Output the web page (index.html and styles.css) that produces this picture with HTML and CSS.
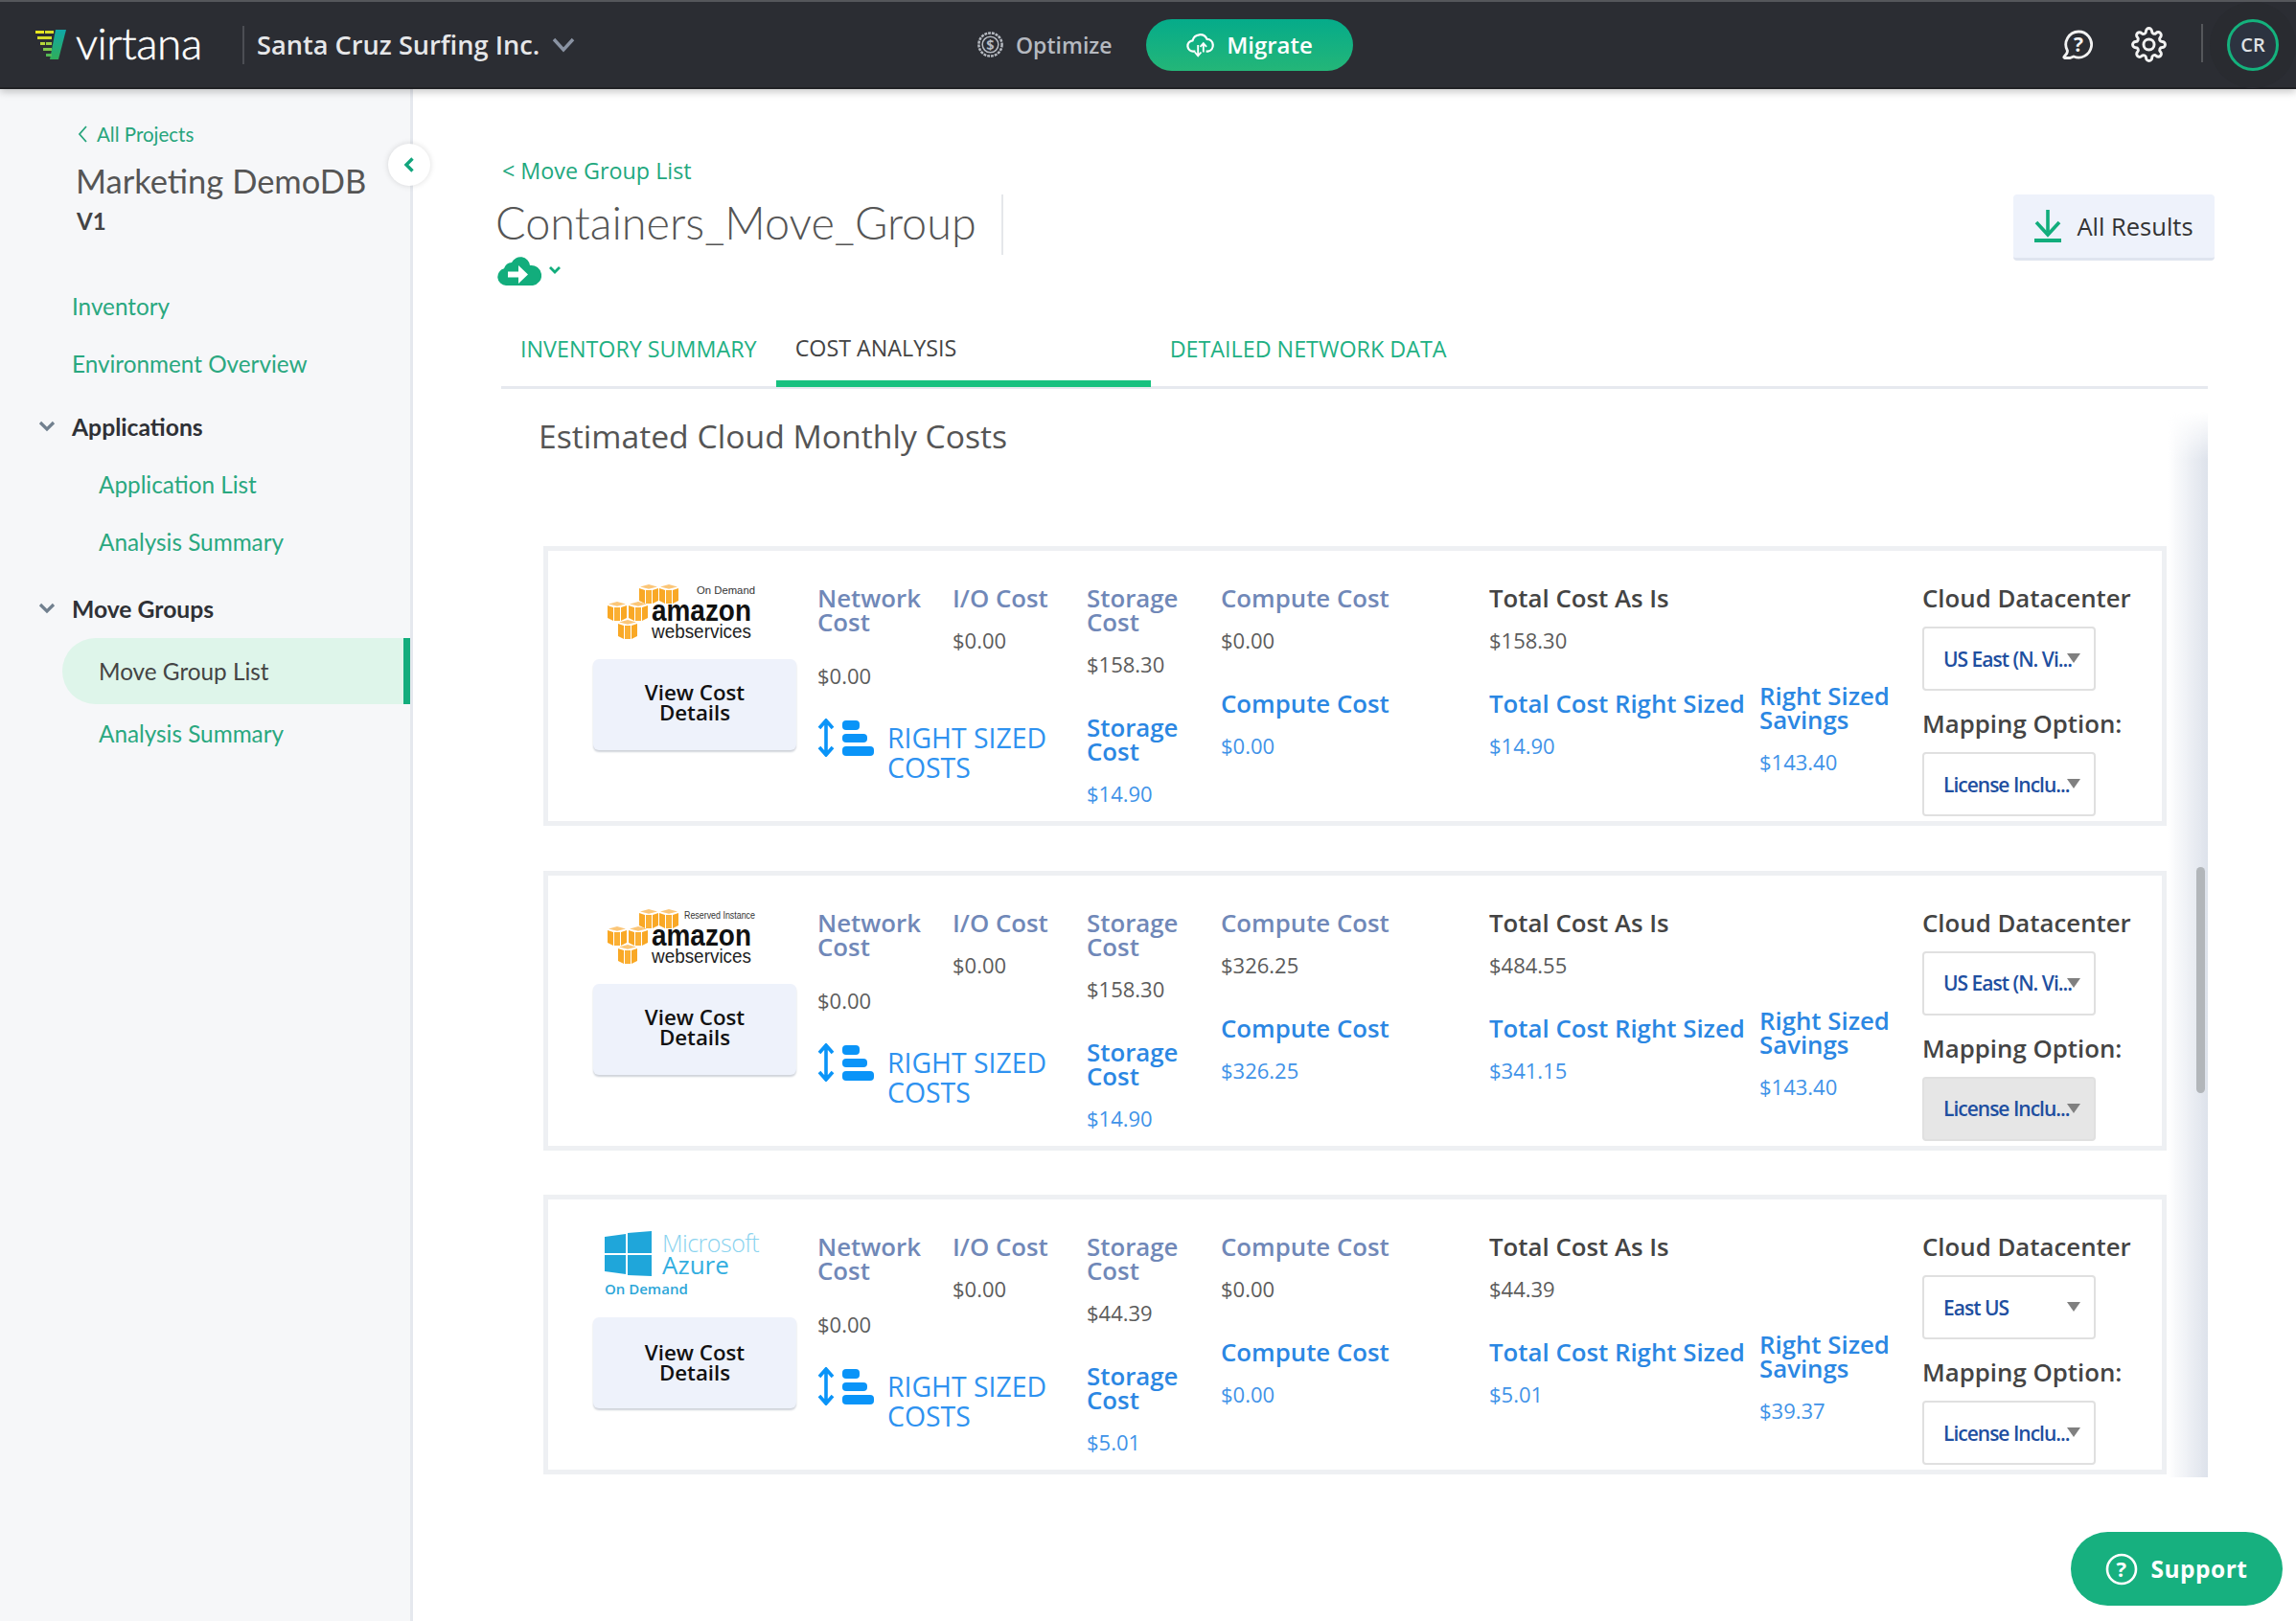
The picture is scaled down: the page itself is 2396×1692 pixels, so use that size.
FILE: index.html
```html
<!DOCTYPE html>
<html lang="en">
<head>
    <meta charset="UTF-8">
    <title>Containers_Move_Group - Cost Analysis</title>
    <link rel="stylesheet" href="styles.css">
</head>
<body>

    <!-- Shared shapes -->
    <svg class="defs" width="0" height="0">
        <defs>
            <linearGradient id="markGrad" x1="0" y1="0" x2="0" y2="1">
                <stop offset="0" stop-color="#10a8a8"/>
                <stop offset="1" stop-color="#2fae5a"/>
            </linearGradient>
            <symbol id="cube" viewBox="0 0 20 20">
                <polygon points="0,4 6,6 6,20 0,17" fill="#f9a825"/>
                <polygon points="7,6 13,6 13,20 7,20" fill="#fbb034"/>
                <polygon points="14,6 20,4 20,17 14,20" fill="#f9a825"/>
                <polygon points="1,2.6 10,0 19,2.6 10,4.8" fill="#fbc678"/>
            </symbol>
            <symbol id="resize" viewBox="0 0 59 40">
                <path d="M9 3v34M2 10l7-8 7 8M2 30l7 8 7-8" fill="none" stroke="#0a94f8" stroke-width="3.6"/>
                <rect x="26" y="2" width="18" height="10" rx="4" fill="#0a94f8"/>
                <rect x="26" y="16" width="26" height="9" rx="4" fill="#0a94f8"/>
                <rect x="26" y="29" width="33" height="10" rx="4" fill="#0a94f8"/>
            </symbol>
        </defs>
    </svg>

    <!-- Top Bar -->
    <header class="topbar">
        <div class="brand-area">
            <svg class="mark" viewBox="0 0 32 32">
                <path d="M21 0h11l-8 31h-9z" fill="url(#markGrad)"/>
                <rect x="0" y="1" width="9" height="3" fill="#e9e61f"/>
                <rect x="10" y="1" width="9" height="3" fill="#d8e02a"/>
                <rect x="2" y="7" width="15" height="3" fill="#d5dc2a"/>
                <rect x="5" y="13" width="5" height="3" fill="#b7d53a"/>
                <rect x="11" y="13" width="6" height="3" fill="#9ccd42"/>
                <rect x="8" y="19" width="9" height="3" fill="#7fc54a"/>
                <rect x="11" y="25" width="6" height="3" fill="#54b954"/>
            </svg>
            <span class="wordmark">virtana</span>
            <span class="org-name">Santa Cruz Surfing Inc.</span>
            <svg class="org-chevron" viewBox="0 0 24 16"><path d="M2 2l10 11L22 2" fill="none" stroke="#8a93a3" stroke-width="3.4"/></svg>
        </div>
        <div class="mode-switch">
            <a class="optimize">
                <svg viewBox="0 0 30 30">
                    <circle cx="15" cy="15" r="12.5" fill="none" stroke="#b5b9c0" stroke-width="2.6" stroke-dasharray="3 1"/>
                    <circle cx="15" cy="15" r="8.6" fill="none" stroke="#b5b9c0" stroke-width="1.6"/>
                    <text x="15" y="20.5" text-anchor="middle" class="dollar">$</text>
                </svg>
                Optimize
            </a>
            <a class="migrate">
                <svg viewBox="0 0 32 26">
                    <path d="M10 20H8a6 6 0 0 1-1-12A8.5 8.5 0 0 1 23 6.5a6.8 6.8 0 0 1 1 13.5h-2" fill="none" stroke="#fff" stroke-width="2.4"/>
                    <path d="M13 25V13M9.5 21l3.5 4 3.5-4M19 11v10M15.5 15l3.5-4 3.5 4" fill="none" stroke="#fff" stroke-width="2"/>
                </svg>
                Migrate
            </a>
        </div>
        <div class="top-actions">
            <svg class="help-icon" viewBox="0 0 34 32">
                <path d="M18 2a13.5 13.5 0 1 1-5 26l-4 1.5H3.5q-1.5-.5 0-2Q6.5 25 6.5 22A13.5 13.5 0 0 1 18 2z" fill="none" stroke="#f2f2f2" stroke-width="2.8"/>
                <text x="18" y="23" text-anchor="middle" class="help-mark">?</text>
            </svg>
            <svg class="gear-icon" viewBox="0 0 24 24" fill="none" stroke="#f2f2f2" stroke-width="1.9">
                <circle cx="12" cy="12" r="3.6"/>
                <path d="M19.4 15a1.65 1.65 0 0 0 .33 1.82l.06.06a2 2 0 0 1 0 2.83 2 2 0 0 1-2.83 0l-.06-.06a1.65 1.65 0 0 0-1.82-.33 1.65 1.65 0 0 0-1 1.51V21a2 2 0 0 1-2 2 2 2 0 0 1-2-2v-.09A1.65 1.65 0 0 0 9 19.4a1.65 1.65 0 0 0-1.82.33l-.06.06a2 2 0 0 1-2.83 0 2 2 0 0 1 0-2.83l.06-.06a1.65 1.65 0 0 0 .33-1.82 1.65 1.65 0 0 0-1.51-1H3a2 2 0 0 1-2-2 2 2 0 0 1 2-2h.09A1.65 1.65 0 0 0 4.6 9a1.65 1.65 0 0 0-.33-1.82l-.06-.06a2 2 0 0 1 0-2.83 2 2 0 0 1 2.83 0l.06.06a1.65 1.65 0 0 0 1.82.33H9a1.65 1.65 0 0 0 1-1.51V3a2 2 0 0 1 2-2 2 2 0 0 1 2 2v.09a1.65 1.65 0 0 0 1 1.51 1.65 1.65 0 0 0 1.82-.33l.06-.06a2 2 0 0 1 2.83 0 2 2 0 0 1 0 2.83l-.06.06a1.65 1.65 0 0 0-.33 1.82V9a1.65 1.65 0 0 0 1.51 1H21a2 2 0 0 1 2 2 2 2 0 0 1-2 2h-.09a1.65 1.65 0 0 0-1.51 1z"/>
            </svg>
            <span class="avatar">CR</span>
        </div>
    </header>

    <div class="page">

        <!-- Sidebar -->
        <aside class="sidebar">
            <a class="back-link">
                <svg viewBox="0 0 12 20"><path d="M10 2L3 10l7 8" fill="none" stroke="#27a57c" stroke-width="1.8"/></svg>
                All Projects
            </a>
            <div class="project-name">Marketing DemoDB</div>
            <div class="project-version">V1</div>

            <nav class="side-nav">
                <a class="nav-link">Inventory</a>
                <a class="nav-link">Environment Overview</a>
                <div class="nav-group first-group">
                    <svg viewBox="0 0 18 12"><path d="M2 2l7 7 7-7" fill="none" stroke="#71808f" stroke-width="3.2"/></svg>
                    Applications
                </div>
                <a class="nav-link sub">Application List</a>
                <a class="nav-link sub">Analysis Summary</a>
                <div class="nav-group second-group">
                    <svg viewBox="0 0 18 12"><path d="M2 2l7 7 7-7" fill="none" stroke="#71808f" stroke-width="3.2"/></svg>
                    Move Groups
                </div>
                <a class="nav-link sub active">Move Group List</a>
                <a class="nav-link sub">Analysis Summary</a>
            </nav>

            <button class="collapse-btn">
                <svg viewBox="0 0 12 18"><path d="M9.5 2.5L3 9l6.5 6.5" fill="none" stroke="#12a57d" stroke-width="3.4"/></svg>
            </button>
        </aside>

        <!-- Main Content -->
        <main class="content">
            <a class="crumb">&lt; Move Group List</a>

            <div class="title-row">
                <div>
                    <h1 class="title">Containers_Move_Group</h1>
                    <div class="cloud-status">
                        <svg class="cloud" viewBox="0 0 46 32">
                            <path d="M9 32a9 9 0 0 1-2-17.7A9 9 0 0 1 15 8a10 10 0 0 1 19 3 10.5 10.5 0 0 1 3 21z" fill="#12ad7c"/>
                            <path d="M11 17.5h11V11l10 9.5L22 30v-6.5H11z" fill="#fff"/>
                        </svg>
                        <svg class="cloud-chevron" viewBox="0 0 14 10"><path d="M2 2l5 5 5-5" fill="none" stroke="#12ad7c" stroke-width="2.8"/></svg>
                    </div>
                </div>
                <button class="results-btn">
                    <svg viewBox="0 0 28 34">
                        <path d="M14 0v23" stroke="#12ad7c" stroke-width="3.6" fill="none"/>
                        <path d="M2 13l12 13 12-13" stroke="#12ad7c" stroke-width="3.6" fill="none"/>
                        <rect x="0" y="30" width="28" height="4" fill="#12ad7c"/>
                    </svg>
                    All Results
                </button>
            </div>

            <div class="tabs">
                <a class="tab">INVENTORY SUMMARY</a>
                <a class="tab active">COST ANALYSIS</a>
                <a class="tab">DETAILED NETWORK DATA</a>
            </div>

            <section class="cost-panel">
                <h2>Estimated Cloud Monthly Costs</h2>

                <!-- AWS On Demand -->
                <article class="cost-card">
                    <div class="provider">
                        <svg class="aws-logo" viewBox="0 0 154 58">
                            <use href="#cube" x="33" y="0" width="20" height="20"/>
                            <use href="#cube" x="54" y="0" width="20" height="20"/>
                            <use href="#cube" x="0" y="18" width="20" height="20"/>
                            <use href="#cube" x="22" y="18" width="20" height="20"/>
                            <use href="#cube" x="11" y="37" width="20" height="20"/>
                            <text x="93" y="10" textLength="61" lengthAdjust="spacingAndGlyphs" class="aws-plan">On Demand</text>
                            <text x="46" y="38" textLength="104" lengthAdjust="spacingAndGlyphs" class="aws-name">amazon</text>
                            <text x="46" y="56" textLength="104" lengthAdjust="spacingAndGlyphs" class="aws-sub">webservices</text>
                        </svg>
                        <button class="details-btn">View Cost<br>Details</button>
                    </div>
                    <div class="net-io">
                        <div class="net-io-top">
                            <div class="net-col">
                                <div class="label">Network<br>Cost</div>
                                <div class="value net-value">$0.00</div>
                            </div>
                            <div>
                                <div class="label">I/O Cost</div>
                                <div class="value">$0.00</div>
                            </div>
                        </div>
                        <div class="right-sized">
                            <svg><use href="#resize"/></svg>
                            <span>RIGHT SIZED<br>COSTS</span>
                        </div>
                    </div>
                    <div class="col storage-col">
                        <div class="label">Storage<br>Cost</div>
                        <div class="value">$158.30</div>
                        <div class="label blue">Storage<br>Cost</div>
                        <div class="value blue">$14.90</div>
                    </div>
                    <div class="col compute-col">
                        <div class="label">Compute Cost</div>
                        <div class="value">$0.00</div>
                        <div class="label blue">Compute Cost</div>
                        <div class="value blue">$0.00</div>
                    </div>
                    <div class="col total-col">
                        <div class="label dark">Total Cost As Is</div>
                        <div class="value">$158.30</div>
                        <div class="label blue">Total Cost Right Sized</div>
                        <div class="value blue">$14.90</div>
                    </div>
                    <div class="col savings-col">
                        <div class="label blue">Right Sized<br>Savings</div>
                        <div class="value blue">$143.40</div>
                    </div>
                    <div class="col options-col">
                        <div class="label dark">Cloud Datacenter</div>
                        <div class="select"><span>US East (N. Vi...</span></div>
                        <div class="label dark">Mapping Option:</div>
                        <div class="select"><span>License Inclu...</span></div>
                    </div>
                </article>

                <!-- AWS Reserved -->
                <article class="cost-card">
                    <div class="provider">
                        <svg class="aws-logo" viewBox="0 0 154 58">
                            <use href="#cube" x="33" y="0" width="20" height="20"/>
                            <use href="#cube" x="54" y="0" width="20" height="20"/>
                            <use href="#cube" x="0" y="18" width="20" height="20"/>
                            <use href="#cube" x="22" y="18" width="20" height="20"/>
                            <use href="#cube" x="11" y="37" width="20" height="20"/>
                            <text x="80" y="10" textLength="74" lengthAdjust="spacingAndGlyphs" class="aws-plan">Reserved Instance</text>
                            <text x="46" y="38" textLength="104" lengthAdjust="spacingAndGlyphs" class="aws-name">amazon</text>
                            <text x="46" y="56" textLength="104" lengthAdjust="spacingAndGlyphs" class="aws-sub">webservices</text>
                        </svg>
                        <button class="details-btn">View Cost<br>Details</button>
                    </div>
                    <div class="net-io">
                        <div class="net-io-top">
                            <div class="net-col">
                                <div class="label">Network<br>Cost</div>
                                <div class="value net-value">$0.00</div>
                            </div>
                            <div>
                                <div class="label">I/O Cost</div>
                                <div class="value">$0.00</div>
                            </div>
                        </div>
                        <div class="right-sized">
                            <svg><use href="#resize"/></svg>
                            <span>RIGHT SIZED<br>COSTS</span>
                        </div>
                    </div>
                    <div class="col storage-col">
                        <div class="label">Storage<br>Cost</div>
                        <div class="value">$158.30</div>
                        <div class="label blue">Storage<br>Cost</div>
                        <div class="value blue">$14.90</div>
                    </div>
                    <div class="col compute-col">
                        <div class="label">Compute Cost</div>
                        <div class="value">$326.25</div>
                        <div class="label blue">Compute Cost</div>
                        <div class="value blue">$326.25</div>
                    </div>
                    <div class="col total-col">
                        <div class="label dark">Total Cost As Is</div>
                        <div class="value">$484.55</div>
                        <div class="label blue">Total Cost Right Sized</div>
                        <div class="value blue">$341.15</div>
                    </div>
                    <div class="col savings-col">
                        <div class="label blue">Right Sized<br>Savings</div>
                        <div class="value blue">$143.40</div>
                    </div>
                    <div class="col options-col">
                        <div class="label dark">Cloud Datacenter</div>
                        <div class="select"><span>US East (N. Vi...</span></div>
                        <div class="label dark">Mapping Option:</div>
                        <div class="select disabled"><span>License Inclu...</span></div>
                    </div>
                </article>

                <!-- Azure On Demand -->
                <article class="cost-card">
                    <div class="provider">
                        <svg class="azure-logo" viewBox="0 0 160 67">
                            <polygon points="0,6 22,3 22,23 0,23" fill="#1fa6da"/>
                            <polygon points="24,2 49,0 49,23 24,23" fill="#1fa6da"/>
                            <polygon points="0,25 22,25 22,45 0,42" fill="#1fa6da"/>
                            <polygon points="24,25 49,25 49,47 24,46" fill="#1fa6da"/>
                            <text x="60" y="22" class="azure-ms">Microsoft</text>
                            <text x="60" y="45" class="azure-name">Azure</text>
                            <text x="0" y="66" class="azure-plan">On Demand</text>
                        </svg>
                        <button class="details-btn azure-btn">View Cost<br>Details</button>
                    </div>
                    <div class="net-io">
                        <div class="net-io-top">
                            <div class="net-col">
                                <div class="label">Network<br>Cost</div>
                                <div class="value net-value">$0.00</div>
                            </div>
                            <div>
                                <div class="label">I/O Cost</div>
                                <div class="value">$0.00</div>
                            </div>
                        </div>
                        <div class="right-sized">
                            <svg><use href="#resize"/></svg>
                            <span>RIGHT SIZED<br>COSTS</span>
                        </div>
                    </div>
                    <div class="col storage-col">
                        <div class="label">Storage<br>Cost</div>
                        <div class="value">$44.39</div>
                        <div class="label blue">Storage<br>Cost</div>
                        <div class="value blue">$5.01</div>
                    </div>
                    <div class="col compute-col">
                        <div class="label">Compute Cost</div>
                        <div class="value">$0.00</div>
                        <div class="label blue">Compute Cost</div>
                        <div class="value blue">$0.00</div>
                    </div>
                    <div class="col total-col">
                        <div class="label dark">Total Cost As Is</div>
                        <div class="value">$44.39</div>
                        <div class="label blue">Total Cost Right Sized</div>
                        <div class="value blue">$5.01</div>
                    </div>
                    <div class="col savings-col">
                        <div class="label blue">Right Sized<br>Savings</div>
                        <div class="value blue">$39.37</div>
                    </div>
                    <div class="col options-col">
                        <div class="label dark">Cloud Datacenter</div>
                        <div class="select"><span>East US</span></div>
                        <div class="label dark">Mapping Option:</div>
                        <div class="select"><span>License Inclu...</span></div>
                    </div>
                </article>

                <div class="scroll-thumb"></div>
            </section>
        </main>
    </div>

    <a class="support-btn">
        <svg viewBox="0 0 34 34">
            <circle cx="17" cy="17" r="15" fill="none" stroke="#fff" stroke-width="2.6"/>
            <text x="17" y="25" text-anchor="middle" class="support-mark">?</text>
        </svg>
        Support
    </a>

</body>
</html>
```

FILE: styles.css
```css
/* Base */
* {
    box-sizing: border-box;
}
body {
    margin: 0;
    width: 2396px;
    height: 1692px;
    overflow: hidden;
    background-color: white;
    font-family: "Open Sans", sans-serif;
    color: #444;
}
.defs {
    display: block;
}
a {
    text-decoration: none;
}
button {
    font-family: inherit;
    border: none;
    padding: 0;
}

/* Top Bar */
.topbar {
    height: 93px;
    background-color: #2b2d33;
    border-top: 2px solid #55575b;
    border-bottom: 2px solid #202125;
    display: flex;
    align-items: center;
    justify-content: space-between;
    position: relative;
    z-index: 2;
    box-shadow: 0 3px 8px rgba(0, 0, 0, 0.22);
}
.brand-area {
    display: flex;
    align-items: center;
    width: 1019px;
    padding-left: 37px;
}
.mark {
    width: 32px;
    height: 32px;
}
.wordmark {
    margin-left: 10px;
    width: 176px;
    height: 40px;
    line-height: 36px;
    border-right: 2px solid #4c4e54;
    font-family: Lato, sans-serif;
    font-weight: 300;
    font-size: 46px;
    letter-spacing: -0.5px;
    -webkit-text-stroke: 0.5px white;
    color: white;
}
.org-name {
    margin-left: 13px;
    font-size: 27.2px;
    font-weight: 600;
    color: #e6e7e9;
}
.org-chevron {
    width: 24px;
    height: 16px;
    margin-left: 13px;
}
.mode-switch {
    display: flex;
    align-items: center;
    position: absolute;
    left: 1019px;
}
.optimize {
    display: flex;
    align-items: center;
    gap: 12px;
    width: 177px;
    font-size: 23px;
    font-weight: 600;
    color: #b5b9c0;
}
.optimize svg {
    width: 29px;
    height: 29px;
}
.dollar {
    font-family: "Open Sans", sans-serif;
    font-size: 15px;
    font-weight: 700;
    fill: #b5b9c0;
}
.migrate {
    width: 216px;
    height: 54px;
    border-radius: 27px;
    background: linear-gradient(#05ab8a, #24b678);
    display: flex;
    align-items: center;
    justify-content: center;
    gap: 12px;
    font-size: 24px;
    font-weight: 600;
    color: white;
}
.migrate svg {
    width: 30px;
    height: 26px;
}
.top-actions {
    display: flex;
    align-items: center;
    padding-right: 18px;
}
.help-icon {
    width: 34px;
    height: 32px;
}
.help-mark {
    font-family: "Open Sans", sans-serif;
    font-size: 21px;
    font-weight: 700;
    fill: #f2f2f2;
}
.gear-icon {
    width: 37px;
    height: 37px;
    margin-left: 39px;
}
.avatar {
    width: 54px;
    height: 54px;
    margin-left: 63px;
    border-radius: 50%;
    border: 3px solid #14b27d;
    background-color: #2c3340;
    box-shadow: 0 0 0 18px #292b30;
    display: flex;
    align-items: center;
    justify-content: center;
    font-size: 20px;
    font-weight: 600;
    color: #dfe1e4;
    position: relative;
}
.avatar::before {
    content: "";
    position: absolute;
    left: -30px;
    top: 2px;
    height: 40px;
    border-left: 2px solid #55575b;
}

/* Layout */
.page {
    display: flex;
    height: 1599px;
}

/* Sidebar */
.sidebar {
    width: 431px;
    flex-shrink: 0;
    padding-top: 35px;
    background-color: #f6f7f9;
    border-right: 3px solid #e5e8ee;
    font-family: Lato, sans-serif;
    position: relative;
}
.back-link {
    display: flex;
    align-items: center;
    margin-left: 80px;
    height: 24px;
    gap: 9px;
    font-size: 20.5px;
    color: #27a57c;
}
.back-link svg {
    width: 12px;
    height: 20px;
}
.project-name {
    margin: 17px 0 0 79px;
    font-size: 34.5px;
    line-height: 40px;
    color: #555;
}
.project-version {
    margin: 8px 0 0 80px;
    font-size: 24px;
    line-height: 28px;
    font-weight: 700;
    color: #444;
}
.side-nav {
    margin-top: 44px;
}
.nav-link {
    display: flex;
    align-items: center;
    height: 60px;
    padding-left: 75px;
    font-size: 24.3px;
    color: #2aa880;
}
.nav-link.sub {
    padding-left: 103px;
}
.nav-link.active {
    height: 69px;
    margin: 1px 0 0 65px;
    padding-left: 38px;
    border-radius: 35px 0 0 35px;
    border-right: 7px solid #12ad7c;
    background-color: #def5ea;
    color: #444;
}
.nav-group {
    display: flex;
    align-items: center;
    height: 60px;
    padding-left: 40px;
    font-size: 24.7px;
    font-weight: 700;
    color: #2f3136;
}
.nav-group svg {
    width: 18px;
    height: 12px;
    margin-right: 17px;
}
.first-group {
    margin-top: 6px;
}
.second-group {
    margin-top: 10px;
}
.collapse-btn {
    position: absolute;
    left: 405px;
    top: 57px;
    width: 44px;
    height: 44px;
    border-radius: 50%;
    background-color: white;
    box-shadow: 0 0 6px rgba(0, 0, 0, 0.14);
    display: flex;
    align-items: center;
    justify-content: center;
}
.collapse-btn svg {
    width: 12px;
    height: 18px;
}

/* Main Content */
.content {
    flex: 1;
    min-width: 0;
    padding: 70px 92px 0;
}
.crumb {
    display: block;
    margin-left: 1px;
    font-size: 23.3px;
    line-height: 30px;
    color: #1fa87e;
}
.title-row {
    display: flex;
    justify-content: space-between;
    align-items: flex-start;
    height: 147px;
    margin-right: -7px;
    padding-top: 10px;
}
.title {
    margin: 0 0 0 -6px;
    padding-right: 28px;
    width: 530px;
    height: 63px;
    line-height: 58px;
    font-family: Lato, sans-serif;
    font-size: 46.8px;
    font-weight: 300;
    color: #555;
    border-right: 2px solid #e5e7ea;
    white-space: nowrap;
}
.cloud-status {
    display: flex;
    align-items: center;
    margin: 0 0 0 -4px;
}
.cloud {
    width: 46px;
    height: 32px;
}
.cloud-chevron {
    width: 14px;
    height: 10px;
    margin-left: 7px;
}
.results-btn {
    width: 210px;
    height: 69px;
    border-radius: 4px;
    background-color: #eef2fb;
    border-bottom: 3px solid #dfe4ef;
    display: flex;
    align-items: center;
    justify-content: center;
    gap: 16px;
    font-size: 25.5px;
    color: #333;
}
.results-btn svg {
    width: 28px;
    height: 34px;
}

/* Tabs */
.tabs {
    display: flex;
    height: 66px;
    border-bottom: 3px solid #e6e9ef;
}
.tab {
    height: 64px;
    padding: 9px 20px 0;
    font-size: 23.3px;
    line-height: 30px;
    color: #1fb083;
}
.tab.active {
    width: 391px;
    border-bottom: 7px solid #18c180;
    line-height: 28px;
    color: #444;
}

/* Cost Panel */
.cost-panel {
    position: relative;
    height: 1136px;
    padding: 29px 0 0 44px;
    overflow: hidden;
}
.cost-panel::after {
    content: "";
    position: absolute;
    top: 24px;
    right: 0;
    bottom: 0;
    width: 42px;
    background: linear-gradient(to right, rgba(222, 227, 236, 0), #dde2eb);
    -webkit-mask-image: linear-gradient(transparent, black 50px);
    mask-image: linear-gradient(transparent, black 50px);
}
.cost-panel h2 {
    margin: 0 0 95px -5px;
    font-size: 33.7px;
    line-height: 40px;
    font-weight: 400;
    color: #555;
}
.scroll-thumb {
    position: absolute;
    z-index: 1;
    top: 499px;
    right: 3px;
    width: 9px;
    height: 236px;
    border-radius: 5px;
    background-color: #b2b6ba;
}
.cost-card {
    display: flex;
    width: 1694px;
    height: 292px;
    margin-bottom: 46.5px;
    padding: 35px 0 0 47px;
    border: 5px solid #eef0f3;
    background-color: white;
}
.provider {
    width: 212px;
    margin-right: 22px;
    flex-shrink: 0;
}
.aws-logo {
    display: block;
    width: 154px;
    height: 58px;
    margin-left: 15px;
    overflow: visible;
}
.aws-plan {
    font-family: "Liberation Sans", sans-serif;
    font-size: 10px;
    fill: #333;
}
.aws-name {
    font-family: "Liberation Sans", sans-serif;
    font-size: 32px;
    font-weight: 700;
    fill: #111;
}
.aws-sub {
    font-family: "Liberation Sans", sans-serif;
    font-size: 20px;
    fill: #222;
}
.azure-logo {
    display: block;
    width: 160px;
    height: 67px;
    margin: -2px 0 0 12px;
    overflow: visible;
}
.azure-ms {
    font-family: "Open Sans", sans-serif;
    font-size: 25px;
    font-weight: 300;
    letter-spacing: -0.5px;
    fill: #8ad3ef;
}
.azure-name {
    font-family: "Open Sans", sans-serif;
    font-size: 26px;
    fill: #33aee0;
}
.azure-plan {
    font-family: "Open Sans", sans-serif;
    font-size: 15px;
    font-weight: 600;
    fill: #2ca6d8;
}
.details-btn {
    display: block;
    width: 212px;
    height: 95px;
    margin-top: 20px;
    padding-bottom: 5px;
    border-radius: 6px;
    background-color: #eef2fb;
    box-shadow: 0 2px 2px #cfd3da;
    font-size: 22.3px;
    line-height: 21px;
    font-weight: 600;
    color: #111;
}
.azure-btn {
    margin-top: 23px;
    padding-bottom: 1px;
}
.net-io {
    width: 281px;
    flex-shrink: 0;
    padding-top: 2px;
}
.net-io-top {
    display: flex;
    height: 108px;
}
.net-col {
    width: 141px;
}
.col {
    flex-shrink: 0;
    padding-top: 2px;
}
.storage-col {
    width: 140px;
}
.storage-col .label.blue {
    margin-top: 41px;
}
.compute-col {
    width: 280px;
}
.compute-col .label.blue {
    margin-top: 41px;
}
.total-col {
    width: 282px;
}
.total-col .label.blue {
    margin-top: 41px;
}
.savings-col {
    width: 170px;
    padding-top: 104px;
}
.options-col {
    width: 230px;
}
.label {
    font-size: 25.8px;
    line-height: 25px;
    font-weight: 600;
    color: #7088b8;
}
.label.blue {
    color: #2b87e3;
}
.label.dark {
    color: #444;
}
.value {
    margin-top: 19px;
    font-size: 22px;
    line-height: 25px;
    color: #5c5c5c;
}
.value.blue {
    color: #3f93e8;
}
.net-value {
    margin-top: 31px;
}
.right-sized {
    display: flex;
    margin-top: 30px;
    gap: 14px;
}
.right-sized svg {
    width: 59px;
    height: 40px;
}
.right-sized span {
    padding-top: 5px;
    font-size: 28.4px;
    line-height: 31px;
    color: #2e92f0;
}
.select {
    position: relative;
    width: 181px;
    height: 67px;
    margin: 17px 0 22px;
    padding-left: 20px;
    border: 2px solid #e0e0e0;
    border-radius: 4px;
    display: flex;
    align-items: center;
    font-size: 21px;
    font-weight: 600;
    letter-spacing: -1px;
    color: #1f4fa0;
}
.select::after {
    content: "";
    position: absolute;
    right: 14px;
    top: 26px;
    border-left: 7px solid transparent;
    border-right: 7px solid transparent;
    border-top: 10px solid #808080;
}
.select.disabled {
    background-color: #e6e6e6;
}

/* Support Button */
.support-btn {
    position: fixed;
    left: 2161px;
    top: 1599px;
    width: 221px;
    height: 77px;
    border-radius: 39px;
    background-color: #17b07f;
    display: flex;
    align-items: center;
    justify-content: center;
    gap: 13px;
    font-size: 24.5px;
    font-weight: 700;
    letter-spacing: 0.5px;
    color: white;
}
.support-btn svg {
    width: 34px;
    height: 34px;
}
.support-mark {
    font-family: "Open Sans", sans-serif;
    font-size: 22px;
    font-weight: 700;
    fill: white;
}
```
